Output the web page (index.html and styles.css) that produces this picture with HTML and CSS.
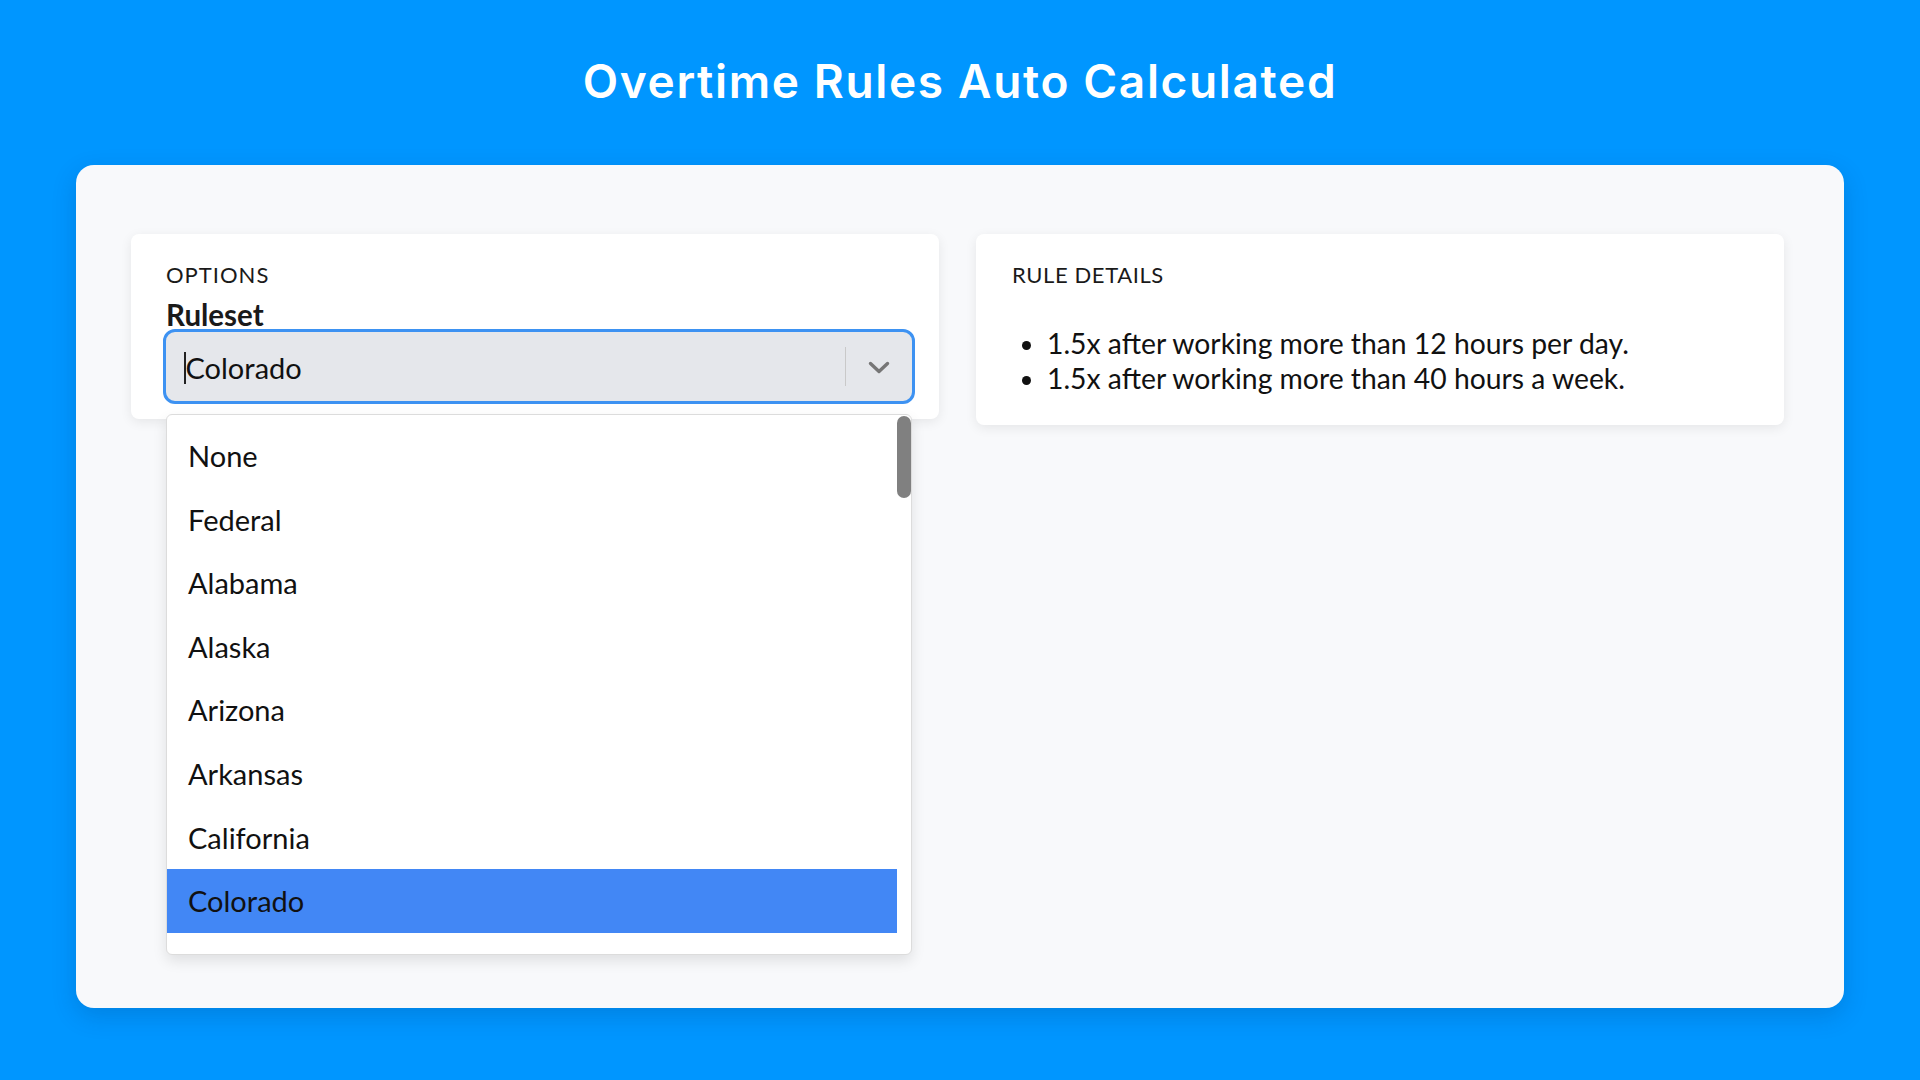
FILE: index.html
```html
<!DOCTYPE html>
<html lang="en">
<head>
<meta charset="utf-8">
<title>Overtime Rules Auto Calculated</title>
<link rel="stylesheet" href="styles.css">
</head>
<body>
<header class="hero">
  <h1 class="hero-title">Overtime Rules Auto Calculated</h1>
</header>
<main class="card">
  <section class="panel panel-options">
    <div class="panel-label">OPTIONS</div>
    <div class="field-label">Ruleset</div>
    <div class="select-wrap">
      <div class="select">
        <div class="select-value"><span class="caret"></span>Colorado</div>
        <span class="select-sep"></span>
        <span class="select-indicator">
          <svg width="22" height="13" viewBox="0 0 22 13"><polyline points="2.5,2.5 11,10.5 19.5,2.5" fill="none" stroke="#767676" stroke-width="3.4" stroke-linecap="round" stroke-linejoin="round"/></svg>
        </span>
      </div>
      <div class="menu">
        <ul class="menu-list">
          <li class="menu-item">None</li>
          <li class="menu-item">Federal</li>
          <li class="menu-item">Alabama</li>
          <li class="menu-item">Alaska</li>
          <li class="menu-item">Arizona</li>
          <li class="menu-item">Arkansas</li>
          <li class="menu-item">California</li>
          <li class="menu-item is-selected">Colorado</li>
        </ul>
        <div class="menu-scroll"><span class="menu-thumb"></span></div>
      </div>
    </div>
  </section>
  <section class="panel panel-details">
    <div class="panel-label">RULE DETAILS</div>
    <ul class="rules">
      <li>1.5x after working more than 12 hours per day.</li>
      <li>1.5x after working more than 40 hours a week.</li>
    </ul>
  </section>
</main>
</body>
</html>
```

FILE: styles.css
```css
* { box-sizing: border-box; }
html, body { margin: 0; padding: 0; }
body {
  width: 1920px;
  height: 1080px;
  overflow: hidden;
  background: #0096ff;
  font-family: Lato, "Open Sans", sans-serif;
  color: #111;
}
.hero {
  padding-top: 59px;
  height: 165px;
}
.hero-title {
  margin: 0;
  text-align: center;
  color: #fff;
  font-family: Inter, "Open Sans", sans-serif;
  font-weight: 600;
  font-size: 46px;
  line-height: 45px;
  letter-spacing: 1.65px;
}
.card {
  margin: 0 76px;
  height: 843px;
  background: #f8f9fb;
  border-radius: 18px;
  box-shadow: 0 8px 24px rgba(0, 40, 90, 0.18);
  padding: 69px 60px 69px 55px;
  display: flex;
  align-items: flex-start;
  gap: 37px;
}
.panel {
  width: 808px;
  background: #fff;
  border-radius: 8px;
  box-shadow: 0 3px 12px rgba(0, 0, 0, 0.08);
}
.panel-options {
  padding: 27px 24px 15px 32px;
}
.panel-details {
  padding: 27px 36px 29px 35px;
}
.panel-label {
  font-size: 22px;
  line-height: 28px;
  letter-spacing: 1px;
  color: #1a1a1a;
  padding-left: 3px;
}
.panel-details .panel-label { padding-left: 1px; letter-spacing: 0.6px; }
.field-label {
  margin-top: 12px;
  font-size: 29.5px;
  line-height: 28px;
  font-weight: 700;
  color: #1a1a1a;
  padding-left: 3px;
}
.select-wrap {
  position: relative;
}
.select {
  height: 75px;
  border: 3px solid #3d92f2;
  border-radius: 12px;
  background: #e5e7eb;
  display: flex;
  align-items: center;
}
.select-value {
  flex: 1;
  padding-left: 18px;
  font-size: 29px;
  line-height: 34px;
  display: flex;
  align-items: center;
  color: #111;
  padding-top: 2px;
}
.caret {
  display: inline-block;
  width: 1.5px;
  height: 32px;
  background: #222;
}
.select-sep {
  width: 1.5px;
  height: 39px;
  background: #c9c9c9;
}
.select-indicator {
  width: 66px;
  display: flex;
  justify-content: center;
  align-items: center;
  padding-top: 2px;
}
.menu {
  position: absolute;
  top: 85px;
  left: 3px;
  right: 3px;
  height: 541px;
  background: #fff;
  border: 1px solid #dcdcdc;
  border-radius: 6px;
  box-shadow: 0 6px 14px rgba(0, 0, 0, 0.10);
  display: flex;
  overflow: hidden;
  z-index: 5;
}
.menu-list {
  list-style: none;
  margin: 0;
  padding: 9px 0 0 0;
  flex: 1;
}
.menu-item {
  height: 63.6px;
  line-height: 63.6px;
  padding-left: 21px;
  font-size: 29px;
  color: #111;
}
.menu-item.is-selected {
  background: #4287f5;
}
.menu-scroll {
  width: 14px;
  position: relative;
}
.menu-thumb {
  position: absolute;
  top: 1px;
  left: 0;
  width: 14px;
  height: 82px;
  border-radius: 7px;
  background: #808080;
}
.rules {
  margin: 37px 0 0 0;
  padding-left: 36px;
  font-size: 28.3px;
  line-height: 35px;
  color: #111;
}
```
